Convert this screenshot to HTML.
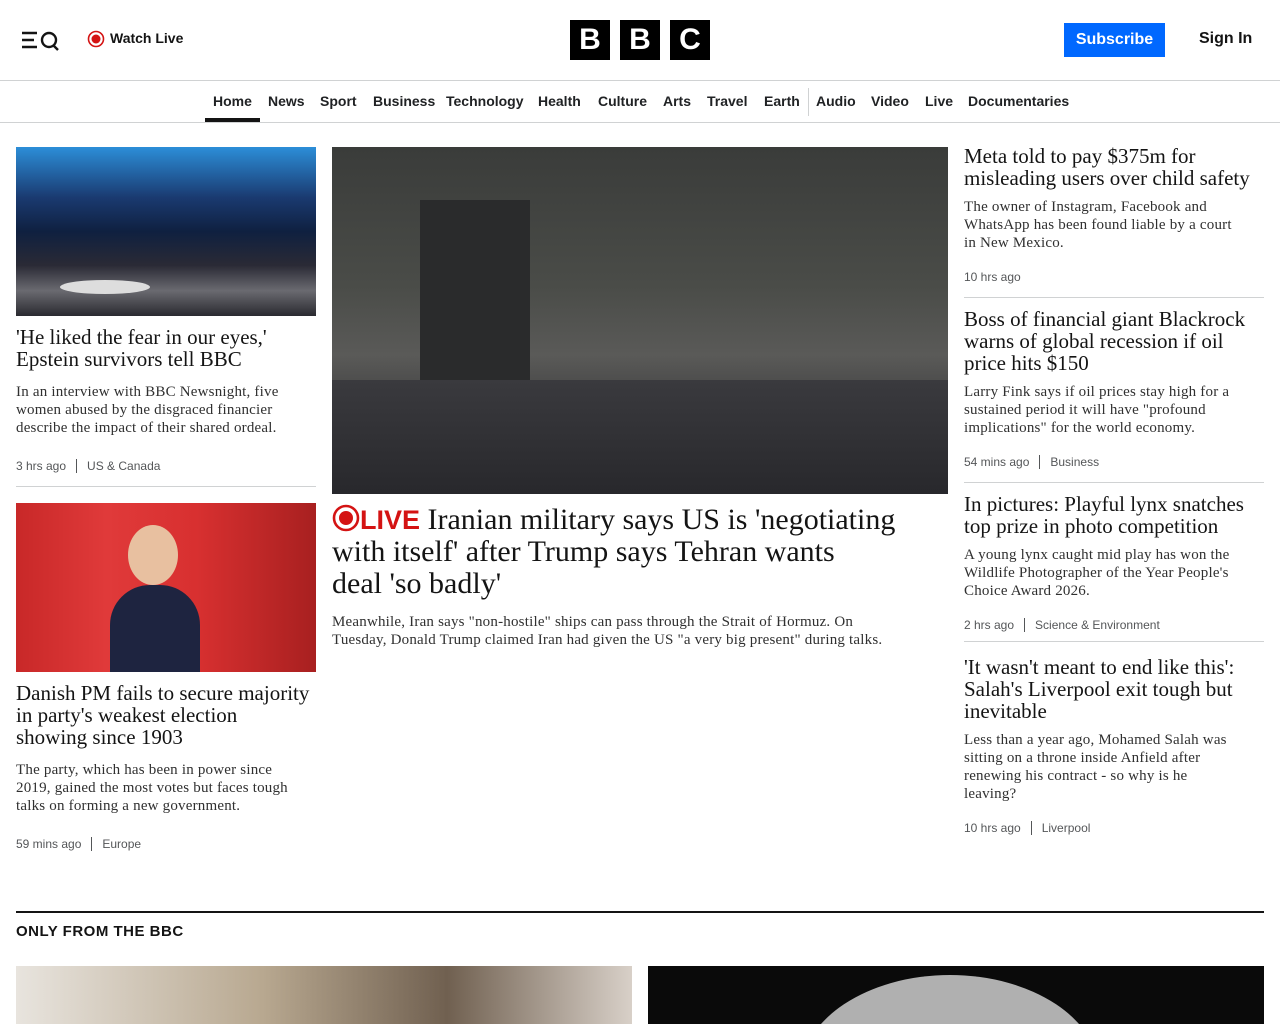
<!DOCTYPE html>
<html><head><meta charset="utf-8"><style>
*{margin:0;padding:0;box-sizing:border-box}
html,body{width:1280px;height:1024px;overflow:hidden}
body{background:#fff;font-family:"Liberation Sans",sans-serif;color:#141414;position:relative}
#w{position:relative;width:1280px;height:1024px;overflow:hidden}
.a{position:absolute}
.h{font-family:"Liberation Serif",serif;font-size:21px;line-height:22px;color:#141414;white-space:nowrap}
.s{font-family:"Liberation Serif",serif;font-size:15px;line-height:18px;color:#303030;white-space:nowrap;letter-spacing:0.2px}
.m{font-size:12px;color:#545658;line-height:14px}
.m span{border-left:1px solid #545658;margin-left:10px;padding-left:10px}
.nav{position:absolute;top:93px;left:0;font-size:14px;font-weight:bold;color:#202224}
.nav b{position:absolute;white-space:nowrap}
.hr{position:absolute;height:1px;background:#d0d2d3}
.logo{position:absolute;top:20px;width:40px;height:40px;background:#000;color:#fff;font-weight:bold;font-size:30px;text-align:center;line-height:40px}
</style></head><body><div id="w">
<svg class="a" style="left:22px;top:31px" width="40" height="20" viewBox="0 0 40 20"><g stroke="#141414" stroke-width="2.4" fill="none"><path d="M0 2h15M0 9h12M0 16h15"/><circle cx="27" cy="9" r="7"/><path d="M31 14l5 5"/></g></svg>
<svg class="a" style="left:87px;top:30px" width="18" height="18"><circle cx="9" cy="9" r="7.5" fill="none" stroke="#d41313" stroke-width="1.6"/><circle cx="9" cy="9" r="4.5" fill="#d41313"/></svg>
<div class="a" style="left:110px;top:30px;font-size:14px;font-weight:bold">Watch Live</div>
<div class="logo" style="left:570px">B</div><div class="logo" style="left:620px">B</div><div class="logo" style="left:670px">C</div>
<div class="a" style="left:1064px;top:23px;width:101px;height:34px;background:#0068ff;color:#fff;font-weight:bold;font-size:16px;text-align:center;line-height:33px">Subscribe</div>
<div class="a" style="left:1199px;top:30px;font-size:16px;font-weight:bold">Sign In</div>
<div class="hr" style="left:0;top:80px;width:1280px"></div>
<div class="hr" style="left:0;top:122px;width:1280px"></div>
<div class="a" style="left:205px;top:118px;width:55px;height:4px;background:#141414"></div>
<div class="nav" style="width:1280px">
<b style="left:213px">Home</b><b style="left:268px">News</b><b style="left:320px">Sport</b><b style="left:373px">Business</b><b style="left:446px">Technology</b><b style="left:538px">Health</b><b style="left:598px">Culture</b><b style="left:663px">Arts</b><b style="left:707px">Travel</b><b style="left:764px">Earth</b><b style="left:816px">Audio</b><b style="left:871px">Video</b><b style="left:925px">Live</b><b style="left:968px">Documentaries</b></div>
<div class="a" style="left:808px;top:88px;width:1px;height:28px;background:#d0d2d3"></div>

<div class="a" style="left:16px;top:147px;width:300px;height:169px;background:linear-gradient(180deg,#2c8ed8 0%,#1a3a70 30%,#0f2040 50%,#2a2a35 70%,#6a6a70 85%,#2a2a30 100%)"></div>
<div class="a" style="left:60px;top:280px;width:90px;height:14px;border-radius:50%;background:#ddd"></div>
<div class="a h" style="left:16px;top:326px">'He liked the fear in our eyes,'<br>Epstein survivors tell BBC</div>
<div class="a s" style="left:16px;top:383px">In an interview with BBC Newsnight, five<br>women abused by the disgraced financier<br>describe the impact of their shared ordeal.</div>
<div class="a m" style="left:16px;top:459px">3 hrs ago<span>US &amp; Canada</span></div>
<div class="hr" style="left:16px;top:486px;width:300px"></div>
<div class="a" style="left:16px;top:503px;width:300px;height:169px;background:linear-gradient(90deg,#c82828 0%,#e03a3a 30%,#d83030 60%,#a82020 100%)"></div>
<div class="a" style="left:110px;top:585px;width:90px;height:87px;background:#1e2440;border-radius:40px 40px 0 0"></div>
<div class="a" style="left:128px;top:525px;width:50px;height:60px;background:#e8c0a0;border-radius:50%"></div>
<div class="a h" style="left:16px;top:682px">Danish PM fails to secure majority<br>in party's weakest election<br>showing since 1903</div>
<div class="a s" style="left:16px;top:761px">The party, which has been in power since<br>2019, gained the most votes but faces tough<br>talks on forming a new government.</div>
<div class="a m" style="left:16px;top:837px">59 mins ago<span>Europe</span></div>

<div class="a" style="left:332px;top:147px;width:616px;height:347px;background:linear-gradient(180deg,#3a3c3a 0%,#4a4c48 40%,#5a5a58 60%,#3a3a3c 80%,#2a2a2c 100%)"></div>
<div class="a" style="left:420px;top:200px;width:110px;height:294px;background:#2a2b2c"></div>
<div class="a" style="left:332px;top:380px;width:616px;height:114px;background:linear-gradient(180deg,#3a3a3e,#28282c)"></div>
<div class="a" style="left:332px;top:504px;font-family:'Liberation Serif',serif;font-size:30px;line-height:32px;white-space:nowrap"><svg width="28" height="28" style="vertical-align:-3px"><circle cx="14" cy="14" r="12" fill="none" stroke="#d41313" stroke-width="2.6"/><circle cx="14" cy="14" r="7" fill="#d41313"/></svg><b style="font-family:'Liberation Sans',sans-serif;color:#d41313;font-size:27px">LIVE</b> Iranian military says US is 'negotiating<br>with itself' after Trump says Tehran wants<br>deal 'so badly'</div>
<div class="a s" style="left:332px;top:613px">Meanwhile, Iran says "non-hostile" ships can pass through the Strait of Hormuz. On<br>Tuesday, Donald Trump claimed Iran had given the US "a very big present" during talks.</div>

<div class="a h" style="left:964px;top:145px">Meta told to pay $375m for<br>misleading users over child safety</div>
<div class="a s" style="left:964px;top:198px">The owner of Instagram, Facebook and<br>WhatsApp has been found liable by a court<br>in New Mexico.</div>
<div class="a m" style="left:964px;top:270px">10 hrs ago</div>
<div class="hr" style="left:964px;top:297px;width:300px"></div>
<div class="a h" style="left:964px;top:308px">Boss of financial giant Blackrock<br>warns of global recession if oil<br>price hits $150</div>
<div class="a s" style="left:964px;top:383px">Larry Fink says if oil prices stay high for a<br>sustained period it will have "profound<br>implications" for the world economy.</div>
<div class="a m" style="left:964px;top:455px">54 mins ago<span>Business</span></div>
<div class="hr" style="left:964px;top:482px;width:300px"></div>
<div class="a h" style="left:964px;top:493px">In pictures: Playful lynx snatches<br>top prize in photo competition</div>
<div class="a s" style="left:964px;top:546px">A young lynx caught mid play has won the<br>Wildlife Photographer of the Year People's<br>Choice Award 2026.</div>
<div class="a m" style="left:964px;top:618px">2 hrs ago<span>Science &amp; Environment</span></div>
<div class="hr" style="left:964px;top:641px;width:300px"></div>
<div class="a h" style="left:964px;top:656px">'It wasn't meant to end like this':<br>Salah's Liverpool exit tough but<br>inevitable</div>
<div class="a s" style="left:964px;top:731px">Less than a year ago, Mohamed Salah was<br>sitting on a throne inside Anfield after<br>renewing his contract - so why is he<br>leaving?</div>
<div class="a m" style="left:964px;top:821px">10 hrs ago<span>Liverpool</span></div>

<div class="a" style="left:16px;top:911px;width:1248px;height:2px;background:#141414"></div>
<div class="a" style="left:16px;top:923px;font-size:15px;font-weight:bold;letter-spacing:0.5px">ONLY FROM THE BBC</div>
<div class="a" style="left:16px;top:966px;width:616px;height:58px;background:linear-gradient(90deg,#e8e4de,#b8a890 40%,#706050 70%,#d8d0c8)"></div>
<div class="a" style="left:648px;top:966px;width:616px;height:58px;background:#0a0a0a;overflow:hidden"><div class="a" style="left:152px;top:9px;width:300px;height:200px;border-radius:50%;background:#b0b0b0"></div></div>
</div></body></html>
